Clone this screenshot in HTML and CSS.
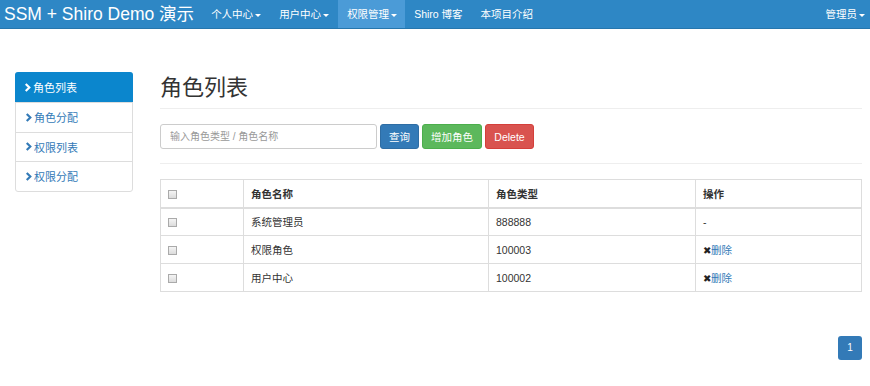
FILE: index.html
```html
<!DOCTYPE html>
<html lang="zh">
<head>
<meta charset="utf-8">
<title>SSM + Shiro Demo</title>
<link rel="stylesheet" href="styles.css">
</head>
<body>
<nav class="navbar">
  <a class="brand">SSM + Shiro Demo 演示</a>
  <ul class="nav">
    <li><a>个人中心<span class="caret"></span></a></li>
    <li><a>用户中心<span class="caret"></span></a></li>
    <li class="active"><a>权限管理<span class="caret"></span></a></li>
    <li><a>Shiro 博客</a></li>
    <li><a>本项目介绍</a></li>
  </ul>
  <ul class="nav nav-right">
    <li><a>管理员<span class="caret"></span></a></li>
  </ul>
</nav>
<div class="main">
  <aside class="side">
    <a class="side-item active"><svg class="chev" viewBox="0 0 8 10"><path d="M1.5 1 L5.5 5 L1.5 9" fill="none" stroke="currentColor" stroke-width="2.4"/></svg>角色列表</a>
    <a class="side-item"><svg class="chev" viewBox="0 0 8 10"><path d="M1.5 1 L5.5 5 L1.5 9" fill="none" stroke="currentColor" stroke-width="2.4"/></svg>角色分配</a>
    <a class="side-item"><svg class="chev" viewBox="0 0 8 10"><path d="M1.5 1 L5.5 5 L1.5 9" fill="none" stroke="currentColor" stroke-width="2.4"/></svg>权限列表</a>
    <a class="side-item"><svg class="chev" viewBox="0 0 8 10"><path d="M1.5 1 L5.5 5 L1.5 9" fill="none" stroke="currentColor" stroke-width="2.4"/></svg>权限分配</a>
  </aside>
  <section class="content">
    <h1 class="title">角色列表</h1>
    <div class="toolbar">
      <input class="search" type="text" placeholder="输入角色类型 / 角色名称">
      <button class="btn btn-primary">查询</button>
      <button class="btn btn-success">增加角色</button>
      <button class="btn btn-danger">Delete</button>
    </div>
    <table class="table">
      <thead>
        <tr><th class="c1"><span class="cb"></span></th><th class="c2">角色名称</th><th class="c3">角色类型</th><th>操作</th></tr>
      </thead>
      <tbody>
        <tr><td><span class="cb"></span></td><td>系统管理员</td><td>888888</td><td>-</td></tr>
        <tr><td><span class="cb"></span></td><td>权限角色</td><td>100003</td><td><span class="x">&#10006;</span><a class="link">删除</a></td></tr>
        <tr><td><span class="cb"></span></td><td>用户中心</td><td>100002</td><td><span class="x">&#10006;</span><a class="link">删除</a></td></tr>
      </tbody>
    </table>
    <div class="pager"><span class="page">1</span></div>
  </section>
</div>
</body>
</html>
```

FILE: styles.css
```css
* { box-sizing: border-box; }
body {
  margin: 0;
  font-family: "Liberation Sans", "Noto Sans CJK SC", sans-serif;
  font-size: 11px;
  color: #333;
  background: #fff;
}
.navbar {
  height: 29px;
  background: #2e87c5;
  border-bottom: 1px solid #2676ad;
  display: flex;
  align-items: stretch;
}
.brand {
  color: #fff;
  font-size: 17.5px;
  line-height: 28px;
  padding: 0 4px;
  margin-right: 4px;
  white-space: nowrap;
}
.nav {
  list-style: none;
  margin: 0;
  padding: 0;
  display: flex;
}
.nav li a {
  display: block;
  color: #fff;
  line-height: 28px;
  padding: 0 9px;
  font-size: 10.5px;
}
.nav li.active a { background: #4b9bd7; padding: 0 8px 0 9px; }
.nav-right { margin-left: auto; }
.nav-right li a { padding: 0 5px 0 10px; }
.caret {
  display: inline-block;
  width: 0; height: 0;
  margin-left: 2px;
  vertical-align: middle;
  border-top: 3px solid #fff;
  border-left: 3px solid transparent;
  border-right: 3px solid transparent;
}
.main {
  display: flex;
  padding: 43px 8px 0 15px;
}
.side {
  width: 118px;
  border: 1px solid #ddd;
  border-radius: 3px;
  align-self: flex-start;
  flex-shrink: 0;
}
.side-item {
  display: flex;
  align-items: center;
  height: 29.5px;
  padding-left: 9px;
  color: #337ab7;
  border-top: 1px solid #ddd;
  font-size: 11px;
}
.side-item:first-child { border-top: none; }
.side-item.active {
  background: #0b86cd;
  color: #fff;
  border-radius: 3px 3px 0 0;
  margin: -1px -1px 0 -1px;
  height: 30px;
}
.chev { width: 8px; height: 9px; margin-right: 1px; }
.content { flex: 1; margin-left: 27px; }
.title {
  margin: 0;
  font-weight: 400;
  font-size: 22px;
  line-height: 26px;
  padding: 0 0 10px;
  border-bottom: 1px solid #eee;
  font-family: "Noto Sans CJK SC", sans-serif;
  height: 37px;
}
.toolbar {
  display: flex;
  gap: 3px;
  padding: 15px 0 14px;
  border-bottom: 1px solid #eee;
}
.search {
  width: 217px;
  height: 25px;
  border: 1px solid #ccc;
  border-radius: 3px;
  padding: 0 9px;
  font: inherit;
  font-size: 10px;
}
.search::placeholder { color: #999; }
.btn {
  height: 25px;
  border-radius: 3px;
  border: 1px solid transparent;
  color: #fff;
  font: inherit;
  font-size: 10.5px;
  padding: 0 8px;
}
.btn-primary { background: #337ab7; border-color: #2e6da4; }
.btn-success { background: #5cb85c; border-color: #4cae4c; }
.btn-danger { background: #d9534f; border-color: #d43f3a; width: 49px; }
.table {
  margin-top: 15px;
  width: 100%;
  border-collapse: collapse;
  border: 1px solid #ddd;
}
.table th, .table td {
  border: 1px solid #ddd;
  height: 28px;
  padding: 0 7px;
  text-align: left;
  font-size: 10.5px;
}
.table th { font-weight: bold; border-bottom-width: 2px; }
.c1 { width: 83px; }
.c2 { width: 245px; }
.c3 { width: 207px; }
.cb {
  display: inline-block;
  width: 9px; height: 9px;
  border: 1px solid #aaa;
  background: linear-gradient(#f4f4f4, #dcdcdc);
  vertical-align: middle;
}
.x { font-size: 10px; color: #222; }
.link { color: #337ab7; }
.pager {
  display: flex;
  justify-content: flex-end;
  margin-top: 44px;
}
.page {
  width: 24px; height: 24px;
  line-height: 24px;
  text-align: center;
  background: #337ab7;
  color: #fff;
  border-radius: 3px;
  font-size: 10px;
}
```
